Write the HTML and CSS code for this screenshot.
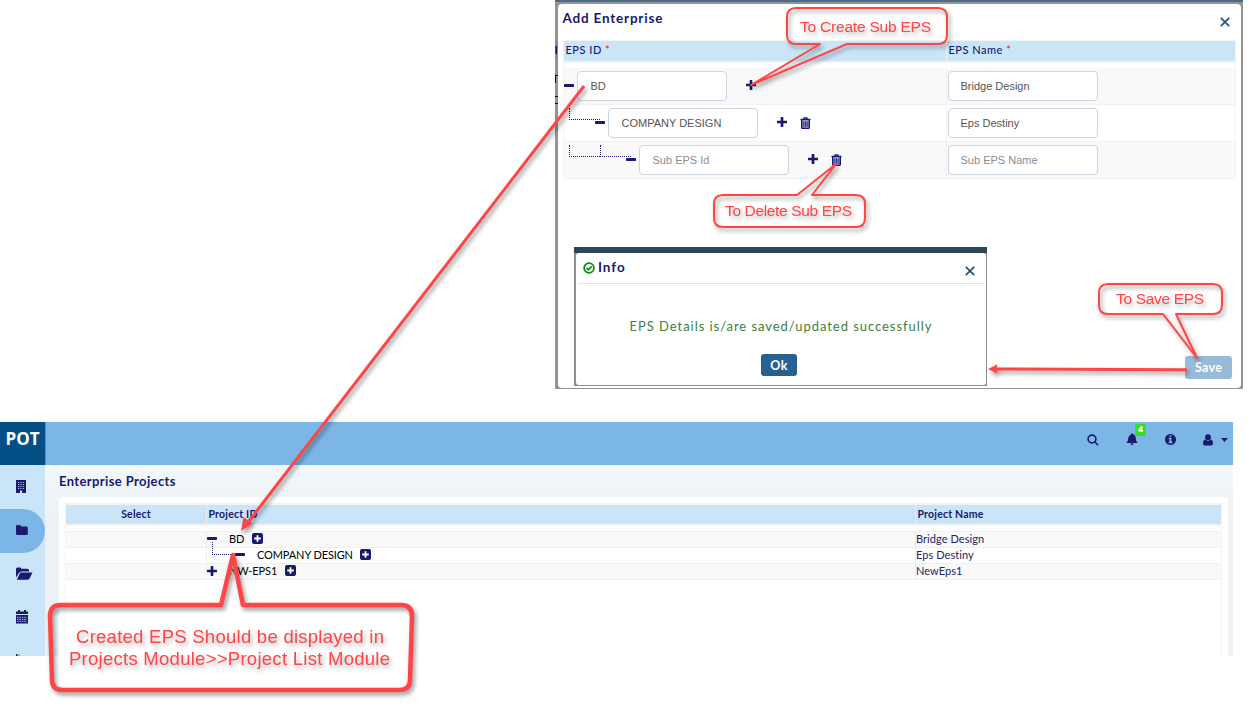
FILE: index.html
```
<!DOCTYPE html>
<html lang="en">
<head>
<meta charset="utf-8">
<title>Enterprise Projects</title>
<link rel="stylesheet" href="styles.css">
</head>
<body>
<svg class="defs" width="0" height="0" aria-hidden="true">
  <symbol id="plus" viewBox="192 128 1408 1408"><path d="M1600 736v192q0 40-28 68t-68 28h-416v416q0 40-28 68t-68 28h-192q-40 0-68-28t-28-68v-416h-416q-40 0-68-28t-28-68v-192q0-40 28-68t68-28h416v-416q0-40 28-68t68-28h192q40 0 68 28t28 68v416h416q40 0 68 28t28 68z"/></symbol>
  <symbol id="minus" viewBox="0 0 10 3"><rect width="10" height="3" rx=".7"/></symbol>
  <symbol id="plus-box" viewBox="0 0 11 11"><rect width="11" height="11" rx="2"/><path d="M5.5 2.2v6.6M2.2 5.5h6.6" stroke="#fff" stroke-width="1.8"/></symbol>
  <symbol id="trash" viewBox="0 0 11 12"><path d="M.5 2.5h10M3.5 2.4l.6-1.6h2.8l.6 1.6" fill="none" stroke="currentColor" stroke-width="1.3"/><path d="M1.7 3v7.200q0 1.200 1.100 1.200h5.400q1.100 0 1.100-1.200V3" fill="#9a9ac4" stroke="currentColor" stroke-width="1.400"/><path d="M3.800 4.500v5.200M5.500 4.500v5.200M7.200 4.500v5.200" stroke="currentColor" stroke-width=".8"/></symbol>
  <symbol id="close" viewBox="0 0 10 10"><path d="M.8 .8l8.4 8.4M9.2 .8L.8 9.2" fill="none" stroke="currentColor" stroke-width="1.7"/></symbol>
</svg>

<main class="stage">
  <section class="enterprise">
    <svg class="behind" width="3" height="64" viewBox="0 0 3 64"><path d="M0 0h3v19H0z" fill="#7590a5"/><path d="M.5 5h1.500v8H.5z" fill="#151560"/><path d="M0 34h3v1H0zM0 34h1v8H0zM0 55h3v1H0zM0 62h3v1H0z" fill="#111"/></svg>
    <div class="dialog">
      <header class="dialog-head"><h2>Add Enterprise</h2><svg class="close"><use href="#close"/></svg></header>
      <div class="eps-grid">
        <div class="eps-row eps-head">
          <div class="cell">EPS ID <em>*</em></div>
          <div class="cell">EPS Name <em>*</em></div>
        </div>
        <div class="eps-row odd">
          <div class="cell level-1"><svg class="minus"><use href="#minus"/></svg><span class="field">BD</span><svg class="plus"><use href="#plus"/></svg></div>
          <div class="cell"><span class="field">Bridge Design</span></div>
        </div>
        <div class="eps-row">
          <div class="cell level-2"><span class="branch"></span><svg class="minus"><use href="#minus"/></svg><span class="field">COMPANY DESIGN</span><svg class="plus"><use href="#plus"/></svg><svg class="trash"><use href="#trash"/></svg></div>
          <div class="cell"><span class="field">Eps Destiny</span></div>
        </div>
        <div class="eps-row odd">
          <div class="cell level-3"><span class="branch"></span><span class="branch"></span><svg class="minus"><use href="#minus"/></svg><span class="field hint">Sub EPS Id</span><svg class="plus"><use href="#plus"/></svg><svg class="trash"><use href="#trash"/></svg></div>
          <div class="cell"><span class="field hint">Sub EPS Name</span></div>
        </div>
      </div>
      <div class="dialog-foot">
        <div class="info">
          <div class="info-body">
            <header class="info-head">
              <svg class="check" viewBox="0 0 12 12"><circle cx="6" cy="6" r="4.9"/><path d="M3.5 5.9l1.9 1.9 3.3-3.4"/></svg>
              <h3>Info</h3>
              <svg class="close"><use href="#close"/></svg>
            </header>
            <p>EPS Details is/are saved/updated successfully</p>
            <button class="ok">Ok</button>
          </div>
        </div>
        <button class="save">Save</button>
      </div>
    </div>
  </section>

  <section class="app">
    <header class="topbar">
      <div class="brand">POT</div>
      <div class="tools">
        <svg class="t-search" viewBox="0 0 12 12"><circle cx="5" cy="5" r="3.9"/><path d="M7.8 7.8l3.4 3.4"/></svg>
        <span class="bell"><svg viewBox="0 0 12 13"><path d="M6 .2q.9 0 1 1C9 1.700 9.700 3.200 9.700 5q0 3.200 2 5H.3q2-1.800 2-5 0-1.800 2.700-3.800 .1-1 1-1zM4.500 10.600h3q-.2 1.700-1.500 1.700t-1.500-1.700z"/></svg><b>4</b></span>
        <svg class="t-info" viewBox="128 128 1536 1536"><path d="M1152 1376v-160q0-14-9-23t-23-9h-96v-512q0-14-9-23t-23-9h-320q-14 0-23 9t-9 23v160q0 14 9 23t23 9h96v320h-96q-14 0-23 9t-9 23v160q0 14 9 23t23 9h448q14 0 23-9t9-23zm-128-896v-160q0-14-9-23t-23-9h-192q-14 0-23 9t-9 23v160q0 14 9 23t23 9h192q14 0 23-9t9-23zm640 416q0 209-103 385.500t-279.500 279.500-385.500 103-385.500-103-279.500-279.500-103-385.500 103-385.500 279.500-279.500 385.500-103 385.500 103 279.500 279.500 103 385.500z"/></svg>
        <svg class="t-user" viewBox="0 0 10 12"><circle cx="5" cy="3.300" r="3"/><path d="M2.200 5.600Q5 8 7.800 5.600 10 6 10 9.500q0 2-1.600 2H1.600Q0 11.500 0 9.500 0 6 2.200 5.600z"/></svg>
        <svg class="t-caret" viewBox="0 0 7 4"><path d="M0 0h7L3.500 4z"/></svg>
      </div>
    </header>
    <div class="workspace">
      <nav class="sidebar">
        <a><svg width="10" height="13" viewBox="0 0 10 13"><path d="M0 0h10v13H0z"/><path d="M2 2.500h6M2 4.500h6M2 6.500h6M2 8.500h6" stroke="#a9b6da" stroke-dasharray="1 .7"/><path d="M4 10.500h2V13H4z" fill="#cce6f9"/></svg></a>
        <a class="active"><svg width="12" height="10" viewBox="0 0 12 10"><path d="M0 1.300Q0 0 1.300 0h2.600q1.200 0 1.200 1.500h5.200q1.500 0 1.500 1.400v5.600q0 1.500-1.500 1.500H1.500Q0 10 0 8.500z"/></svg></a>
        <a><svg width="17" height="13" viewBox="0 0 17 13"><path d="M0 10.500V2Q0 .5 1.500.5H4q1.300 0 1.300 1.300h6Q13 1.800 13 3.300V4.500H5.500Q4 4.500 3 6z"/><path d="M5.500 5.500H16.500L13.500 11.500Q13 12.700 11.500 12.700H.8L3.800 6.500Q4.300 5.500 5.500 5.500z"/></svg></a>
        <a><svg width="12" height="14" viewBox="0 0 12 14"><path d="M0 1.500h2V0h2v1.500h4V0h2v1.500h2V4H0zM0 5h12v8.500H0z"/><path d="M1 7.300h10M1 9.300h10M1 11.300h10" stroke="#cce6f9" stroke-width=".8" stroke-dasharray="1.600 .8"/></svg></a>
        <a class="cut"><svg width="12" height="12" viewBox="0 0 12 12"><path d="M0 0h1.500v12H0zM2.500 .8h1v1h-1z"/></svg></a>
      </nav>
      <div class="content">
        <h1>Enterprise Projects</h1>
        <div class="card">
          <div class="project-table">
            <div class="p-row p-head"><div>Select</div><div>Project ID</div><div>Project Name</div></div>
            <div class="p-row odd"><div></div><div class="name"><svg class="minus"><use href="#minus"/></svg><span>BD</span><svg class="box"><use href="#plus-box"/></svg></div><div>Bridge Design</div></div>
            <div class="p-row"><div></div><div class="name"><span class="p-branch"></span><svg class="minus"><use href="#minus"/></svg><span>COMPANY DESIGN</span><svg class="box"><use href="#plus-box"/></svg></div><div>Eps Destiny</div></div>
            <div class="p-row odd"><div></div><div class="name"><svg class="plus"><use href="#plus"/></svg><span>NW-EPS1</span><svg class="box"><use href="#plus-box"/></svg></div><div>NewEps1</div></div>
          </div>
        </div>
      </div>
    </div>
  </section>

  <!-- Callouts and arrows drawn over the two screens -->
  <svg class="notes" width="1250" height="713" viewBox="0 0 1250 713">
    <g class="outline">
      <path d="M796 8H938Q947 8 947 17V35Q947 44 938 44H847L751 85 820 44H796Q787 44 787 35V17Q787 8 796 8z"/>
      <path d="M723 195H797L836 164 812 195H856Q865 195 865 204V218Q865 227 856 227H723Q714 227 714 218V204Q714 195 723 195z"/>
      <path d="M1108 284H1213Q1222 284 1222 293V305Q1222 314 1213 314H1176L1197 358 1163 314H1108Q1099 314 1099 305V293Q1099 284 1108 284z"/>
      <path class="thick" d="M61 605H221L233 555 243 605H401Q412 605 412 616L410 680Q410 690 399 690H63Q52 690 52 680L50 616Q50 605 61 605z"/>
    </g>
    <g class="arrows">
      <path class="shaft" d="M584 86L249 521"/><path class="head" d="M241 531L243.500 517 252.500 523.500z"/>
      <path class="shaft" d="M1187 369.800L996 369"/><path class="head" d="M988 369L997 364.500V373.500z"/>
    </g>
    <g class="labels">
      <text x="800" y="32" textLength="131">To Create Sub EPS</text>
      <text x="725" y="216" textLength="127">To Delete Sub EPS</text>
      <text x="1116" y="304" textLength="88">To Save EPS</text>
      <text class="big" x="76" y="643" textLength="308">Created EPS Should be displayed in</text>
      <text class="big" x="69" y="665" textLength="321">Projects Module&gt;&gt;Project List Module</text>
    </g>
  </svg>
</main>
</body>
</html>
```
FILE: styles.css
```
* { box-sizing: border-box; }
body { margin: 0; background: #fff; color: #191970; font-family: Lato, sans-serif; }
h1, h2, h3, p { margin: 0; }
button { border: 0; padding: 0; color: #fff; font: bold 12.500px Lato, sans-serif; letter-spacing: .3px; border-radius: 3px; }
svg { flex: none; fill: currentColor; display: block; }
.defs { position: absolute; }
.stage { position: relative; width: 1250px; height: 713px; overflow: hidden; }

/* Add Enterprise dialog */
.enterprise { position: relative; width: 688px; height: 389px; margin-left: 555px; padding: 2px 2px 1px 3px; background: #949494; border-top: 2px solid #496c8b; }
.behind { position: absolute; left: 0; top: 39px; }
.dialog { height: 384px; background: #fff; border-radius: 4px; display: flex; flex-direction: column; }
.dialog-head { height: 36px; padding: 0 11px 0 4.500px; display: flex; justify-content: space-between; }
.dialog-head h2 { font-size: 13.500px; line-height: 28px; letter-spacing: .8px; }
.close { width: 10px; height: 10px; color: #26506f; }
.dialog-head .close { margin-top: 13px; }
.eps-grid { margin: 0 5px 0 5px; border-right: 1px solid #f3f3f3; border-left: 1px solid #f3f3f3; height: 139px; border-top: 1px solid #f3f3f3; }
.eps-row { display: grid; grid-template-columns: 382px 1fr; height: 37px; border-bottom: 1px solid #f2f2f2; }
.odd { background: #f9f9f9; }
.eps-head { height: 22px; background: #cbe5f8; border-bottom: 2px solid #f3f3f3; margin-bottom: 5px; font-size: 11px; font-weight: 500; letter-spacing: .5px; line-height: 18px; }
.eps-head em { color: #f22; font-style: normal; }
.eps-head .cell { padding-left: 1.500px; }
.eps-row:not(.eps-head) .cell { display: flex; align-items: center; }
.cell + .cell { border-left: 1px solid #f1f1f1; }
.eps-row:not(.eps-head) .cell + .cell { padding-left: 1px; }
.field { width: 150px; height: 30px; flex: none; padding-left: 12.500px; border: 1px solid #ced3e0; border-radius: 4px; background: #fff; color: #555; font: 11px/28px "Liberation Sans", Arial, sans-serif; }
.cell + .cell .field { padding-left: 11.500px; }
.hint { color: #8c8c8c; }
.minus { width: 10px; height: 3px; margin: 0 4px 2px 0; }
.eps-grid .minus { margin-right: 3px; }
.eps-grid .plus { width: 10px; height: 10px; margin: 0 0 2px 19px; }
.trash { width: 11px; height: 12px; margin: 0 0 1px 13px; }
.branch { width: 31px; height: 12px; margin: 0 0 18px; border: dotted #191970; border-width: 0 0 1px 1px; flex: none; }
.level-2, .level-3 { padding-left: 5px; }
.level-2 .minus, .level-3 .minus { margin-left: -5px; }
.dialog-foot { display: flex; align-items: flex-start; justify-content: space-between; padding: 68px 9px 0 16px; }
.save { width: 47px; height: 23px; margin-top: 109px; background: #97bbd9; }

/* Info message */
.info { width: 413px; height: 139px; padding: 6px 1px 1px 2px; background: linear-gradient(#2e4556 6px, #8f8f8f 6px); }
.info-body { height: 132px; background: #fff; border-radius: 3px; display: flex; flex-direction: column; align-items: center; }
.info-head { width: 406px; height: 31px; border-bottom: 1px solid #e3e3e3; display: flex; padding: 0 9px 0 5px; }
.check { width: 12px; height: 12px; margin: 9px 3px 0 0; fill: none; stroke: #078c07; stroke-width: 1.700; }
.info-head h3 { font-size: 13.500px; line-height: 29px; letter-spacing: .95px; flex: 1; }
.info-head .close { margin-top: 13px; }
.info p { margin-top: 32px; font-size: 13px; line-height: 20px; letter-spacing: .95px; color: #408040; white-space: nowrap; }
.ok { width: 36px; height: 22px; margin-top: 18px; margin-right: 4px; background: #28608f; }

/* Projects application */
.app { width: 1233px; height: 234px; margin-top: 33px; overflow: hidden; }
.topbar { height: 43px; background: #7cb6e7; display: flex; justify-content: space-between; }
.brand { width: 46px; background: #034f86; border-right: 1px solid #5a93c3; color: #fff; text-align: center; font: bold 17px/33px "Open Sans", sans-serif; }
.tools { display: flex; height: 35px; align-items: center; padding-right: 5px; }
.t-search { width: 12px; height: 12px; margin-right: 27px; fill: none; stroke: currentColor; stroke-width: 1.600; }
.bell { position: relative; width: 12px; margin-right: 27px; }
.bell svg { width: 12px; height: 13px; }
.bell b { position: absolute; left: 9px; top: -9px; width: 11px; height: 12px; border-radius: 2px; background: #36dd21; color: #fff; font: bold 9px/10px "Open Sans", sans-serif; text-align: center; }
.t-info { width: 11px; height: 11px; margin-right: 27px; }
.t-user { width: 10px; height: 12px; margin-right: 8px; }
.t-caret { width: 7px; height: 4px; }
.workspace { display: flex; height: 191px; }
.sidebar { width: 45px; background: #cbe5f8; overflow: hidden; flex: none; }
.sidebar a { height: 44px; display: flex; align-items: center; padding: 0 0 2px 16px; }
.sidebar a:nth-child(3) { height: 43px; }
.sidebar .active { background: #7cb6e7; border-radius: 0 22px 22px 0; }
.sidebar .cut { align-items: flex-start; padding-top: 14px; }
.content { flex: 1; padding: 0 5px 0 14px; background: linear-gradient(#f2f7fa, #ebf1f5 60px); }
.content h1 { height: 32px; font-size: 13px; line-height: 33px; letter-spacing: .38px; }
.card { height: 170px; padding: 6px 6px 0; background: #fff; border-radius: 4px 4px 0 0; box-shadow: 0 0 5px #f2f6f8; }
.project-table { height: 164px; border: solid #f3f3f3; border-width: 2px 1px 0; }
.p-row { display: grid; grid-template-columns: 140px 709px 1fr; height: 16px; border-bottom: 1px solid #f0f0f0; font-size: 11px; line-height: 14px; letter-spacing: .06px; color: #252560; }
.p-head + .p-row { height: 17px; border-top: 1px solid #f0f0f0; }
.p-head { height: 21px; background: #cbe5f8; border-bottom: 2px solid #f3f3f3; margin-bottom: 5px; line-height: 19px; color: #191970; font-weight: bold; font-size: 10.500px; letter-spacing: .2px; }
.p-row > div + div { border-left: 1px solid #ececec; }
.p-head > div { padding-left: 1.500px; }
.p-head > div:first-child { text-align: center; padding: 0; }
.name { display: flex; align-items: center; height: 14px; letter-spacing: -.12px; color: #191970; }
.name > span { color: #000; }
.name .minus { margin: 0 12px 2px 0; }
.name .plus { width: 10px; height: 10px; margin: 0 12px 1px 0; }
.name .box { width: 11px; height: 11px; margin: 0 0 1px 7.500px; }
.name .p-branch { width: 29px; height: 13px; margin: -13px -6px 0 5px; border: dotted #191970; border-width: 0 0 1px 1px; }

/* Annotation layer */
.notes { position: absolute; left: 0; top: 0; }
.outline { fill: none; stroke: #ff4545; stroke-width: 2; stroke-linejoin: round; filter: drop-shadow(2px 3px 2px rgba(0,0,0,.4)); }
.outline .thick { stroke-width: 4.500; }
.arrows { filter: drop-shadow(2px 3px 2px rgba(0,0,0,.4)); }
.shaft { stroke: #ff4545; stroke-width: 3; }
.head { fill: #ff4545; }
.labels { fill: #ff4545; font: 15.500px "Liberation Sans", Arial, sans-serif; filter: drop-shadow(2px 3px 2px rgba(0,0,0,.3)); }
.big { font-size: 18.500px; }
```
